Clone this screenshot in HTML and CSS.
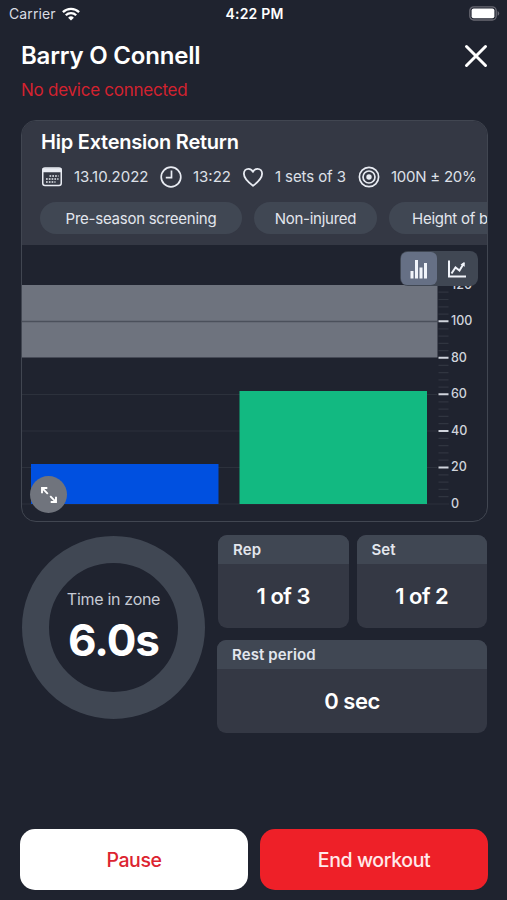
FILE: index.html
```html
<!DOCTYPE html>
<html lang="en">
<head>
  <meta charset="UTF-8">
  <meta name="viewport" content="width=device-width, initial-scale=1.0">
  <title>Workout</title>
  <link rel="stylesheet" href="styles.css">
</head>
<body>
  <div class="status-bar">
    <div class="carrier">
      <span>Carrier</span>
      <svg width="18" height="14" viewBox="0 0 18 14" fill="none" stroke="#fff" stroke-width="2.3">
        <path d="M0.9 5.1a11.6 11.6 0 0 1 16.2 0"/>
        <path d="M3.8 8.2a7.4 7.4 0 0 1 10.4 0"/>
        <path d="M9 13.6 6.1 10.7a4.1 4.1 0 0 1 5.8 0z" fill="#fff" stroke="none"/>
      </svg>
    </div>
    <span class="time">4:22 PM</span>
    <svg class="battery" width="31" height="15" viewBox="0 0 31 15">
      <rect x="0.8" y="0.8" width="26.4" height="13.2" rx="4" fill="none" stroke="#696973" stroke-width="1.3"/>
      <rect x="2.6" y="2.6" width="22.8" height="9.6" rx="2" fill="#fff"/>
      <path d="M28.6 5a2.6 2.6 0 0 1 0 4.8z" fill="#696973"/>
    </svg>
  </div>

  <header class="header">
    <div>
      <h1>Barry O Connell</h1>
      <p class="device">No device connected</p>
    </div>
    <svg class="close" width="24" height="24" viewBox="0 0 24 24" fill="none" stroke="#fff" stroke-width="3" stroke-linecap="round">
      <path d="M2.5 2.5l19 19M21.5 2.5l-19 19"/>
    </svg>
  </header>

  <section class="card">
    <div class="card-head">
      <h2>Hip Extension Return</h2>
      <div class="meta">
        <svg width="22" height="22" viewBox="0 0 22 22" fill="none" stroke="#e8ebf2" stroke-width="1.5">
          <rect x="1.75" y="2" width="18.5" height="17.5" rx="2.2"/>
          <path d="M1.5 4.2h19" stroke-width="4"/>
          <path d="M8.5 10h9M5 13h12.5M5 16h9.5" stroke-width="1.7" stroke-dasharray="1.7 1.1"/>
        </svg>
        <span class="date">13.10.2022</span>
        <svg width="22" height="22" viewBox="0 0 22 22" fill="none" stroke="#e8ebf2" stroke-width="1.7">
          <circle cx="11" cy="11" r="9.8"/>
          <path d="M11.5 4.6V11.6H5.8"/>
        </svg>
        <span class="clock">13:22</span>
        <svg width="22" height="22" viewBox="0 0 22 22" fill="none" stroke="#e8ebf2" stroke-width="1.8" stroke-linejoin="round">
          <path d="M11 19.8C8.3 17.8 1.9 12.9 1.9 7.8c0-3 2-5 4.5-5 2 0 3.7 1.1 4.6 3.1.9-2 2.6-3.1 4.6-3.1 2.5 0 4.5 2 4.5 5C20.1 12.9 13.7 17.8 11 19.8z"/>
        </svg>
        <span class="sets">1 sets of 3</span>
        <svg width="22" height="22" viewBox="0 0 22 22" fill="none" stroke="#e8ebf2" stroke-width="1.7">
          <circle cx="11" cy="11" r="9.6"/>
          <circle cx="11" cy="11" r="6"/>
          <circle cx="11" cy="11" r="2.7" fill="#e8ebf2" stroke="none"/>
        </svg>
        <span class="force">100N ± 20%</span>
      </div>
      <div class="tags">
        <span class="tag tag-screening">Pre-season screening</span>
        <span class="tag tag-injury">Non-injured</span>
        <span class="tag tag-height">Height of bench</span>
      </div>
    </div>

    <div class="chart">
      <svg class="plot" width="465" height="276" viewBox="0 0 465 276">
        <!-- target zone -->
        <rect x="0" y="40" width="415.5" height="72.5" fill="#6e737e"/>
        <path d="M0 76.5h415.5" stroke="#4b505b" stroke-width="1.5"/>
        <path d="M0 149.5h415M0 186h415M0 222.5h415M0 259h427" stroke="#2c313c" stroke-width="1.2"/>
        <!-- bars -->
        <rect x="9" y="219" width="187.5" height="40" fill="#0050e0"/>
        <rect x="217.5" y="146" width="187.5" height="113" fill="#12b981"/>
        <!-- scale -->
        <g stroke="#303540" stroke-width="1.2">
          <path d="M416.5 47.2h10M416.5 54.5h10M416.5 61.9h10M416.5 69.2h10"/>
          <path d="M416.5 83.8h10M416.5 91.1h10M416.5 98.4h10M416.5 105.7h10"/>
          <path d="M416.5 120.3h10M416.5 127.6h10M416.5 134.9h10M416.5 142.2h10"/>
          <path d="M416.5 156.8h10M416.5 164.1h10M416.5 171.4h10M416.5 178.7h10"/>
          <path d="M416.5 193.3h10M416.5 200.6h10M416.5 207.9h10M416.5 215.2h10"/>
          <path d="M416.5 229.8h10M416.5 237.1h10M416.5 244.4h10M416.5 251.7h10"/>
        </g>
        <path d="M416.5 76.3h10M416.5 112.7h10M416.5 149.3h10M416.5 186h10M416.5 222.5h10" stroke="#d0d4dc" stroke-width="2"/>
        <g class="axis">
          <text x="429" y="43.5">120</text>
          <text x="429" y="80">100</text>
          <text x="429" y="116.5">80</text>
          <text x="429" y="153">60</text>
          <text x="429" y="189.5">40</text>
          <text x="429" y="226">20</text>
          <text x="429" y="263">0</text>
        </g>
      </svg>
      <div class="toggle">
        <div class="toggle-item active">
          <svg width="18" height="20" viewBox="0 0 18 20" fill="#f1f4fa">
            <rect x="0.5" y="12" width="3" height="7.5"/>
            <rect x="5" y="1" width="3" height="18.5"/>
            <rect x="9.5" y="8.5" width="3" height="11"/>
            <rect x="14" y="4" width="3" height="15.5"/>
          </svg>
        </div>
        <div class="toggle-item">
          <svg width="20" height="20" viewBox="0 0 20 20" fill="none" stroke="#f1f4fa" stroke-width="2">
            <path d="M2 1.5V17.5H19"/>
            <path d="M4.5 14.5l4-6 4 3 4.5-7.5"/>
            <path d="M13.5 5.6l4-2.6.3 4.7z" fill="#f1f4fa" stroke="none"/>
          </svg>
        </div>
      </div>
      <div class="expand">
        <svg width="18" height="18" viewBox="0 0 18 18" fill="none" stroke="#fff" stroke-width="1.9">
          <path d="M2 7.3V2h5.3M2.2 2.2l5.6 5.6M16 10.7V16h-5.3M15.8 15.8l-5.6-5.6"/>
        </svg>
      </div>
    </div>
  </section>

  <section class="stats">
    <div class="ring">
      <span class="ring-label">Time in zone</span>
      <span class="ring-value">6.0s</span>
    </div>
    <div class="boxes">
      <div class="box-row">
        <div class="box">
          <h3>Rep</h3>
          <p>1 of 3</p>
        </div>
        <div class="box">
          <h3>Set</h3>
          <p>1 of 2</p>
        </div>
      </div>
      <div class="box box-rest">
        <h3>Rest period</h3>
        <p>0 sec</p>
      </div>
    </div>
  </section>

  <footer class="actions">
    <button class="btn">Pause</button>
    <button class="btn btn-end">End workout</button>
  </footer>
</body>
</html>
```
FILE: styles.css
```css
* {
  box-sizing: border-box;
}
body {
  width: 507px;
  height: 900px;
  margin: 0;
  display: flex;
  flex-direction: column;
  overflow: hidden;
  background-color: #1f232f;
  color: #fff;
  font-family: Inter, sans-serif;
  white-space: nowrap;
}
h1, h2, h3, p {
  margin: 0;
}
svg {
  display: block;
  flex: none;
}
.status-bar {
  height: 27px;
  padding: 0 7px 0 9px;
  display: grid;
  grid-template-columns: 1fr auto 1fr;
  align-items: center;
  font-size: 14px;
}
.carrier {
  display: flex;
  align-items: center;
  gap: 6px;
  color: #d9dce3;
  letter-spacing: 0.1px;
}
.time {
  font-weight: 600;
  letter-spacing: 0.2px;
}
.battery {
  justify-self: end;
}
.header {
  height: 93px;
  padding: 14px 19px 0 21px;
  display: flex;
  justify-content: space-between;
}
h1 {
  font-size: 24px;
  line-height: 30px;
  font-weight: 600;
  letter-spacing: -0.2px;
}
.device {
  margin-top: 9px;
  font-size: 17px;
  line-height: 20px;
  letter-spacing: -0.25px;
  color: #d3222f;
}
.close {
  margin-top: 3px;
}
.card {
  width: 467px;
  height: 402px;
  margin-left: 21px;
  border: 1px solid #414651;
  border-radius: 15px;
  overflow: hidden;
}
.card-head {
  height: 124px;
  padding: 9px 0 0 19px;
  background-color: #343844;
}
h2 {
  font-size: 20px;
  line-height: 25px;
  font-weight: 600;
  letter-spacing: -0.23px;
}
.meta {
  height: 22px;
  margin-top: 11px;
  display: flex;
  align-items: center;
  font-size: 15px;
  line-height: 22px;
  color: #dde0e8;
}
.date {
  width: 86px;
  margin-left: 11px;
}
.clock {
  width: 49px;
  margin-left: 11px;
}
.sets {
  width: 83px;
  margin-left: 11px;
  letter-spacing: -0.1px;
}
.force {
  margin-left: 11px;
  letter-spacing: -0.25px;
}
.tags {
  margin: 14px 0 0 -1px;
  display: flex;
  gap: 12px;
}
.tag {
  flex: none;
  height: 32px;
  border-radius: 16px;
  background-color: #404753;
  font-size: 15px;
  line-height: 33px;
  letter-spacing: -0.25px;
  text-align: center;
  color: #e3e6ed;
}
.tag-screening {
  width: 202px;
}
.tag-injury {
  width: 123px;
}
.tag-height {
  padding-left: 23px;
  text-align: left;
  width: 160px;
}
.chart {
  position: relative;
}
.axis {
  font-size: 12.5px;
  font-weight: 500;
  fill: #d0d4dc;
}
.toggle {
  position: absolute;
  top: 6px;
  right: 9px;
  width: 78px;
  height: 35px;
  display: flex;
  padding: 1px;
  border-radius: 8px;
  background-color: #404753;
}
.toggle-item {
  flex: 1;
  display: flex;
  align-items: center;
  justify-content: center;
  border-radius: 6px;
}
.toggle-item.active {
  flex: 0 0 36px;
  background-color: #667085;
}
.expand {
  position: absolute;
  left: 8px;
  bottom: 8px;
  width: 37px;
  height: 37px;
  display: flex;
  align-items: center;
  justify-content: center;
  border-radius: 50%;
  background-color: #70747d;
}
.stats {
  padding: 13px 20px 0 22px;
  display: flex;
  justify-content: space-between;
}
.ring {
  width: 183px;
  height: 183px;
  margin-top: 1px;
  display: flex;
  flex-direction: column;
  align-items: center;
  border: 27px solid #404753;
  border-radius: 50%;
}
.ring-label {
  margin-top: 26px;
  font-size: 16px;
  line-height: 20px;
  letter-spacing: -0.3px;
  color: #c6cad4;
}
.ring-value {
  margin-top: 6px;
  font-size: 44px;
  line-height: 50px;
  font-weight: 700;
  letter-spacing: -1px;
}
.boxes {
  width: 270px;
  display: flex;
  flex-direction: column;
  gap: 12px;
}
.box-row {
  padding-left: 1px;
  display: flex;
  gap: 8px;
}
.box {
  flex: 1;
  height: 93px;
  border-radius: 9px;
  overflow: hidden;
  background-color: #343844;
}
.box-rest {
  flex: none;
}
h3 {
  height: 29px;
  padding-left: 15px;
  background-color: #404753;
  font-size: 15px;
  line-height: 30px;
  font-weight: 600;
  letter-spacing: 0.1px;
  color: #e3e6ed;
}
.box p {
  font-size: 22px;
  line-height: 65px;
  font-weight: 600;
  letter-spacing: -0.5px;
  text-align: center;
}
.actions {
  margin-top: auto;
  padding: 0 19px 10px 20px;
  display: flex;
  gap: 12px;
}
.btn {
  flex: 1;
  height: 61px;
  padding: 0;
  border: 0;
  border-radius: 15px;
  background-color: #fff;
  color: #dc2430;
  font-family: inherit;
  font-size: 19.5px;
  font-weight: 500;
  letter-spacing: -0.4px;
}
.btn-end {
  background-color: #ee2028;
  color: #ffe9ea;
}
```
